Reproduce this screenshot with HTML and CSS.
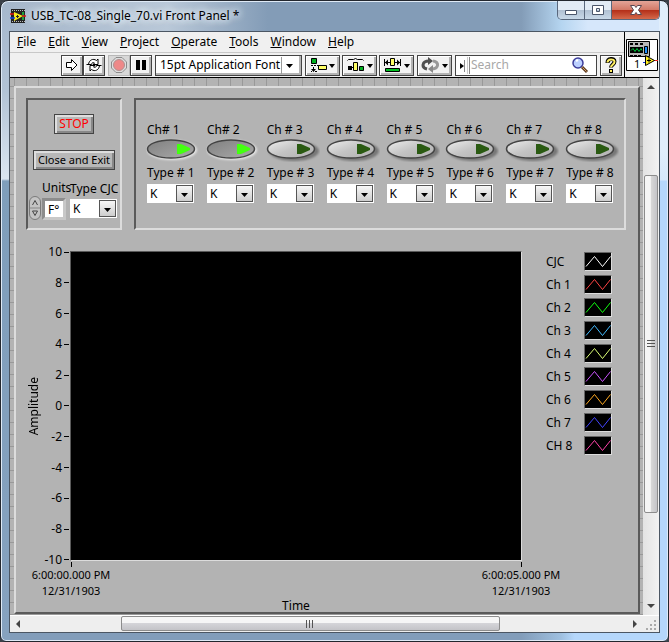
FILE: index.html
```html
<!DOCTYPE html>
<html lang="en">
<head>
<meta charset="utf-8">
<title>USB_TC-08_Single_70.vi Front Panel *</title>
<link rel="stylesheet" href="styles.css">
</head>
<body>
<div class="window">
  <header class="titlebar">
    <svg class="vi-icon" width="16" height="16" viewBox="0 0 16 16" aria-hidden="true">
      <path fill="#222" d="M1 1h14v14H1z"/>
      <path stroke="#bbb" stroke-width="1" stroke-dasharray="1 1" d="M2 2.500h13M2 13.500h13"/>
      <path fill="#f8e71c" d="M4 4l9 4-9 5z"/>
      <path fill="#1ba13a" d="M12 4h2v8h-2z"/>
      <path stroke="#1740e0" stroke-width="1.500" d="M0 10h5"/>
      <path stroke="#e01010" stroke-width="1.500" d="M0 6h4M12 8h4"/>
      <path stroke="#222" d="M6 8.500h3M7.500 7v3"/>
    </svg>
    <h1 class="title">USB_TC-08_Single_70.vi Front Panel *</h1>
    <div class="controls">
      <button class="ctl" aria-label="Minimize"><svg width="14" height="12"><path fill="#fff" stroke="#4b566b" d="M1.500 6.500h11v4h-11z"/></svg></button>
      <button class="ctl" aria-label="Maximize"><svg width="14" height="12"><path fill="#fff" fill-rule="evenodd" stroke="#4b566b" d="M1.500 1.500h11v9h-11zM5.500 4.500h3v3h-3z"/></svg></button>
      <button class="ctl ctl-close" aria-label="Close"><svg width="14" height="12"><path fill="#fff" stroke="#5a4650" d="M1.500 1.500h4l1.500 2 1.500-2h4L9.500 6l3 4.500h-4L7 8.500l-1.500 2h-4l3-4.500z"/></svg></button>
    </div>
  </header>

  <div class="client">
    <div class="top">
      <div class="bars">
        <nav class="menu">
          <a href="#"><u>F</u>ile</a><a href="#"><u>E</u>dit</a><a href="#"><u>V</u>iew</a><a href="#"><u>P</u>roject</a><a href="#"><u>O</u>perate</a><a href="#"><u>T</u>ools</a><a href="#"><u>W</u>indow</a><a href="#"><u>H</u>elp</a>
        </nav>
        <div class="toolbar">
          <div class="group">
            <button class="tool" aria-label="Run"><svg width="14" height="14"><path fill="#fff" stroke="#000" d="M1.500 4.500h5v-3l5.500 5.500-5.500 5.500v-3h-5z"/></svg></button>
            <button class="tool" aria-label="Run continuously"><svg width="16" height="14"><path fill="#fff" stroke="#000" d="M2.500 6.500C3 2 7 0 10.500 2.500l1.500-1.500v5.500H7L8.500 5C7 4 5.500 5 5.500 6.500zM13.500 7.500C13 12 9 14 5.500 11.500L4 13V7.500h5L7.500 9c1.500 1 3 0 3-1.500z"/><path stroke="#000" d="M.5 6.500H4M12 7.500h3.500"/></svg></button>
          </div>
          <div class="group">
            <button class="tool tool-off" aria-label="Abort" disabled><svg width="16" height="16"><path fill="#ddd" stroke="#8c8c8c" d="M5 .5h6L15.500 5v6L11 15.500H5L.5 11V5z"/><circle cx="8" cy="8" r="5.500" fill="#ee8888" stroke="#b09090"/></svg></button>
            <button class="tool" aria-label="Pause"><svg width="12" height="12"><path d="M1 1h4v10H1zM7 1h4v10H7z"/></svg></button>
          </div>
          <label class="font-pick">
            <select class="font-select" aria-label="Text settings"><option>15pt Application Font</option></select>
            <svg class="font-arrow" width="20" height="17"><path stroke="#999" d="M.5 0v17"/><path d="M5 7h7l-3.500 4z"/></svg>
          </label>
          <div class="group group-gap">
            <button class="tool tool-wide" aria-label="Align objects"><svg width="28" height="16"><path fill="#00b020" stroke="#000" d="M2.500 1.500h5v5h-5z"/><path d="M2 8h2v1H2zM5 8h2v1H5zM8 8h2v1H8zM4 10h1v2h2l-2.500 3L2 12h2z"/><path d="M2 14h1v1H2zM6 14h2v1H6z"/><path fill="#ff6" stroke="#000" d="M9.500 8.500h8v4h-8z"/><path d="M20 7h6l-3 4z"/></svg></button>
            <button class="tool tool-wide" aria-label="Distribute objects"><svg width="28" height="16"><path fill="none" stroke="#000" d="M1.500 3.500l1-1h5l2-1 2 1h5l1 1"/><path d="M2 9h4v4H2zM6 10h1v1H6z"/><path fill="#ff6" stroke="#000" d="M7.500 5.500h4v8h-4z"/><path fill="#00b020" stroke="#000" d="M13.500 9.500h4v4h-4z"/><path d="M21 7h6l-3 4z"/></svg></button>
            <button class="tool tool-wide" aria-label="Resize objects"><svg width="28" height="16"><path stroke="#000" d="M1.500 2v7M17.500 2v7M2 5.500h5M12 5.500h5"/><path d="M2 5.500l3-3v6zM17 5.500l-3-3v6z"/><path fill="#ff6" stroke="#000" d="M7.500 1.500h4v7h-4z"/><path fill="#00c020" stroke="#000" d="M2.500 11.500h14v3h-14z"/><path d="M21 7h6l-3 4z"/></svg></button>
          </div>
          <button class="tool tool-wide" aria-label="Reorder"><svg width="28" height="16"><path fill="none" stroke="#505050" stroke-width="3" d="M6 12C0 10.500 1 4 8 4"/><path fill="none" stroke="#999" stroke-width="3" d="M12 4c6.500 1 6 7.500-1 8"/><path fill="#505050" d="M7 0l5 4-5 4z"/><path fill="#888" d="M12 8v8l-5-4z"/><path d="M21 7h6l-3 4z"/></svg></button>
          <div class="search">
            <svg width="12" height="17" aria-hidden="true"><path d="M2 6l4 3-4 3z"/><path stroke="#888" d="M6.500 3v12M11.500 0v17"/><path stroke="#ccc" d="M9.500 0v17"/></svg>
            <input class="search-box" type="text" placeholder="Search" aria-label="Search">
            <svg width="18" height="18" aria-hidden="true"><circle cx="7" cy="7" r="5" fill="#bcd0ff" stroke="#3d3d9a" stroke-width="1.500"/><path stroke="#fff" stroke-width="2" d="M5 5l2-1"/><path stroke="#5d3b20" stroke-width="3" d="M11 11l5 5"/><path stroke="#d9a066" d="M11.500 11.500l4 4"/></svg>
          </div>
          <button class="tool" aria-label="Help"><svg width="12" height="16"><path fill="none" stroke="#000" stroke-width="4" d="M2.500 6c0-5 7-5 7-1.500 0 3-3.500 3-3.500 6M6 12v4"/><path fill="none" stroke="#ffef60" stroke-width="2" d="M2.500 5.500c0-4 7-4 7-.8 0 3-3.500 3-3.500 5.500M6 13v2"/></svg></button>
        </div>
      </div>
      <div class="vi-pane">
        <svg width="32" height="32" viewBox="0 0 32 32" role="img" aria-label="VI icon">
          <path fill="#fff" stroke="#000" d="M.5.5h31v31H.5z"/>
          <path fill="#b8b8b8" stroke="#000" d="M2.500 2.500h21v15h-21z"/>
          <path stroke="#000" stroke-width="2" stroke-dasharray="3 2" d="M4 5h14"/>
          <path d="M4 8h13v6H4z"/>
          <path fill="none" stroke="#00d040" d="M5 11.500l2-2 2 3 2-3 2 3 2-3 1 2"/>
          <path fill="#2090ff" stroke="#000" d="M18.500 7.500h3v7h-3z"/>
          <path stroke="#000" stroke-dasharray="3 1" d="M4 16.500h12"/>
          <path stroke="#1030e0" d="M17 23.500h3"/>
          <path stroke="#e02020" d="M28 21.500h4"/>
          <path fill="#ffee20" stroke="#000" d="M19.500 16.500l9 5-9 5z"/>
          <path stroke="#000" d="M21 21.500h4M23 19.500v4"/>
          <text class="vi-num" x="8" y="29">1</text>
        </svg>
      </div>
    </div>

    <div class="middle">
      <main class="canvas">
        <div class="panel">
          <div class="boxes">
            <section class="box box-main">
              <button class="push push-stop">STOP</button>
              <button class="push">Close and Exit</button>
              <div class="settings">
                <div class="spin" aria-hidden="true"><svg width="14" height="24"><rect x="1.500" y=".5" width="11" height="23" rx="5.500" fill="#c4c4c4" stroke="#7a7a7a"/><path stroke="#888" d="M2 12h10"/><path fill="none" stroke="#444" d="M4.500 9L7 4.500 9.500 9M4.500 15h5L7 19.500z"/></svg></div>
                <div class="field field-units"><label for="units">Units</label><input id="units" class="units" type="text" value="F°"></div>
                <div class="field field-cjc"><label for="cjc">Type CJC</label>
                  <div class="combo"><select id="cjc"><option>K</option></select><svg width="17" height="17"><use href="#drop"/></svg></div>
                </div>
              </div>
            </section>
            <section class="box box-channels" id="channels"></section>
          </div>

          <div class="chart-row">
            <div class="y-title"><span>Amplitude</span></div>
            <div class="y-axis" id="yaxis"></div>
            <div class="plot-col">
              <div class="plot"></div>
              <div class="x-axis">
                <div class="x-label"><i></i>6:00:00.000 PM<br>12/31/1903</div>
                <div class="x-label"><i></i>6:00:05.000 PM<br>12/31/1903</div>
              </div>
              <div class="x-title">Time</div>
            </div>
            <ul class="legend" id="legend"></ul>
          </div>
        </div>
      </main>
      <div class="vscroll">
        <svg width="16" height="17"><path fill="#444" d="M4 11h8L8 7z"/></svg>
        <div class="vtrack"><div class="vthumb"></div></div>
        <svg width="16" height="17"><path fill="#444" d="M4 6h8l-4 4z"/></svg>
      </div>
    </div>
    <div class="hscroll">
      <svg width="17" height="16"><path fill="#444" d="M10 4v8L6 8z"/></svg>
      <div class="htrack"><div class="hthumb"></div></div>
      <svg width="17" height="16"><path fill="#444" d="M7 4v8l4-4z"/></svg>
      <svg width="16" height="16"><path stroke="#aaa" stroke-width="2" stroke-dasharray="2 2" d="M11 5h2M7 9h6M3 13h10"/></svg>
    </div>
  </div>
</div>

<svg class="defs" width="0" height="0" aria-hidden="true">
  <defs>
    <linearGradient id="off" x1="0" y1="0" x2="1" y2="1"><stop offset="0" stop-color="#eee"/><stop offset=".5" stop-color="#c4c4c4"/><stop offset="1" stop-color="#b0b0b0"/></linearGradient>
    <linearGradient id="on" x1="0" y1="0" x2="1" y2="1"><stop offset="0" stop-color="#808080"/><stop offset="1" stop-color="#aaa"/></linearGradient>
    <linearGradient id="face" x1="0" y1="0" x2="0" y2="1"><stop offset="0" stop-color="#f8f8f8"/><stop offset="1" stop-color="#ccc"/></linearGradient>
    <filter id="soft" x="-20%" y="-40%" width="140%" height="180%"><feGaussianBlur stdDeviation="1.200"/></filter>
    <g id="drop"><rect x=".5" y=".5" width="16" height="16" fill="url(#face)" stroke="#555"/><path d="M5 8h7l-3.500 4z"/></g>
  </defs>
</svg>
<script src="app.js"></script>
</body>
</html>
```
FILE: styles.css
```css
* { box-sizing: border-box; }
body {
  margin: 0;
  background: #3a4048;
  color: #000;
  font: 12px/16px "Noto Sans", "Open Sans", sans-serif;
}
button, input, select { font: inherit; color: inherit; margin: 0; padding: 0; }
svg { display: block; flex: none; }
.defs { position: absolute; }

.window {
  display: flex;
  flex-direction: column;
  height: 100vh;
  min-height: 560px;
  padding: 0 8px 8px;
  border: 1px solid #23272e;
  border-radius: 8px 8px 6px 6px;
  box-shadow: inset 0 0 0 1px #dfeaf6;
  background:
    linear-gradient(#e0eefc 0 150px, #d6e8fb 179px, #b5d7fb 180px) right / 9px 100% no-repeat,
    linear-gradient(#a5b7cc 0, #b2c3d6 90px, #dbe5f0 178px, #7f9ebb 180px, #86a2bf) left / 9px 100% no-repeat,
    linear-gradient(90deg, #a5b6ca, #b9c8d8 25%, #839cb7 40%, #839cb7 78%, #b5d5f0 84%, #d6e7fb 88%) top / 100% 31px no-repeat,
    linear-gradient(90deg, #829dba 78%, #9fc0e0 84%, #b5d7fb 86%);
}
.titlebar { display: flex; align-items: center; height: 30px; padding-left: 1px; }
.title {
  flex: 1;
  margin: 0 0 0 5px;
  font-size: 12px;
  font-weight: 400;
  text-shadow: 0 0 6px #e8f0f8, 0 0 8px #e8f0f8, 0 0 10px #e8f0f8;
}
.controls {
  display: flex;
  align-self: flex-start;
  border: 1px solid #59677c;
  border-top: 0;
  border-radius: 0 0 5px 5px;
  overflow: hidden;
}
.ctl {
  display: grid;
  place-items: center;
  width: 27px;
  height: 18px;
  border: 0;
  border-right: 1px solid #59677c;
  background: linear-gradient(#e2ebf5 0 48%, #b0c0d2 50%, #c8d8e8);
}
.ctl-close { width: 47px; border: 0; background: linear-gradient(#e3a498 0, #d37a68 48%, #b32d17 50%, #d4694b); }

.client {
  flex: 1;
  display: flex;
  flex-direction: column;
  min-height: 0;
  border: 1px solid #4b5663;
}
.top { display: flex; border-bottom: 1px solid #000; background: #f0f0f0; }
.bars { flex: 1; min-width: 0; }
.menu { display: flex; align-items: center; gap: 12px; height: 21px; padding: 0 7px; border-bottom: 1px solid #c8c8c8; }
.menu a { color: inherit; text-decoration: none; }
.toolbar { display: flex; align-items: center; gap: 3px; height: 24px; padding: 0 2px 0 51px; }
.group { display: flex; }
.group-gap { gap: 2px; }
.tool {
  display: grid;
  place-items: center;
  width: 22px;
  height: 21px;
  border: 1px solid #444;
  background: #f2f2f2;
  box-shadow: inset 1px 1px #fff, inset -2px -2px #b4b4b4;
}
.tool-off { border-color: #b8b8b8; background: #d8d8d8; box-shadow: none; }
.tool-wide { width: 35px; }
.font-pick, .combo { display: grid; grid-template-columns: 1fr auto; align-items: center; }
.font-pick {
  width: 147px;
  height: 21px;
  border: 1px solid #444;
  background: #fff;
  box-shadow: inset -2px -2px #b4b4b4;
}
.font-select { width: 100%; padding-left: 4px; border: 0; background: none; appearance: none; }
.search { display: flex; align-items: center; flex: 1; min-width: 0; height: 21px; padding: 0 7px 0 2px; border: 1px solid #444; background: #fff; }
.search-box { flex: 1; width: 20px; min-width: 0; padding-left: 1px; border: 0; background: none; }
.search-box::placeholder { color: #a8a8a8; }
.vi-pane { display: grid; place-items: center; width: 35px; border-left: 1px solid #000; }
.vi-num { font: 11px "Noto Sans", sans-serif; }

.middle { flex: 1; display: flex; min-height: 0; }
.canvas {
  flex: 1;
  display: flex;
  min-width: 0;
  padding: 8px 3px 1px 4px;
  background:
    repeating-linear-gradient(90deg, #999 0 1px, transparent 1px 12px) 4px 0,
    repeating-linear-gradient(#999 0 1px, transparent 1px 12px) 0 8px,
    #b3b3b3;
}
.panel {
  flex: 1;
  display: flex;
  flex-direction: column;
  min-width: 0;
  padding: 10px 12px 0 10px;
  border: 2px solid;
  border-color: #dcdcdc #5a5a5a #5a5a5a #dcdcdc;
  background: #b3b3b3;
}
.boxes { display: flex; gap: 12px; }
.box { height: 132px; border: 2px solid; border-color: #5a5a5a #dcdcdc #dcdcdc #5a5a5a; }
.box-main { display: flex; flex-direction: column; align-items: center; width: 96px; padding-top: 14px; }
.push {
  height: 20px;
  padding: 0 4px;
  border: 1px solid #444;
  background: #b8b8b8;
  box-shadow: inset 2px 2px #dedede, inset -2px -2px #888;
  font-size: 11px;
  line-height: 16px;
  white-space: nowrap;
}
.push-stop { margin-bottom: 16px; color: #f00; font-size: 12px; }
.settings { display: flex; align-self: stretch; align-items: flex-end; margin-top: 10px; }
.field label { display: block; height: 18px; line-height: 16px; white-space: nowrap; }
.field-units { width: 25px; }
.units {
  display: block;
  width: 24px;
  height: 22px;
  padding-left: 3px;
  border: 3px solid;
  border-color: #8c8c8c #c8c8c8 #c8c8c8 #8c8c8c;
  background: #fff;
}
.field-cjc { width: 48px; margin-left: 3px; }
.combo { width: 47px; height: 19px; padding-right: 1px; background: #fff; }
.combo select { width: 100%; padding-left: 3px; border: 0; background: none; appearance: none; }
.field-cjc .combo { margin-bottom: 2px; }

.box-channels { flex: 1; display: grid; grid-template-columns: repeat(8, 1fr); padding: 22px 0 0 9px; }
.channel { display: flex; flex-direction: column; align-items: flex-start; white-space: nowrap; }
.channel label { padding-left: 2px; }
.led { margin: 0 0 3px 1px; padding: 0; border: 0; background: none; }
.channel .combo { margin: 3px 0 0 2px; }

.chart-row { flex: 1; display: flex; min-height: 0; padding-top: 21px; }
.y-title { display: grid; place-items: center; width: 16px; margin-bottom: 50px; }
.y-title span { writing-mode: vertical-rl; transform: rotate(180deg); }
.y-axis {
  display: flex;
  flex-direction: column;
  justify-content: space-between;
  width: 28px;
  margin: -7px 0 44px;
}
.tick { display: flex; align-items: center; justify-content: flex-end; gap: 2px; height: 16px; padding-right: 1px; }
.tick i { width: 5px; height: 1px; background: #000; }
.plot-col { flex: 1; display: flex; flex-direction: column; min-width: 0; }
.plot { flex: 1; border: 1px solid; border-color: #5a5a5a #dcdcdc #dcdcdc #5a5a5a; background: #000; }
.x-axis { display: flex; justify-content: space-between; margin: 0 -40px; }
.x-label { width: 82px; font-size: 11px; line-height: 16px; text-align: center; white-space: nowrap; }
.x-label i { display: block; width: 1px; height: 5px; margin: 1px auto 0; background: #000; }
.x-title { height: 13px; line-height: 14px; text-align: center; }
.legend { width: 104px; margin: 1px 0 0; padding: 0 14px 0 24px; list-style: none; }
.legend li { display: flex; align-items: center; justify-content: space-between; height: 19px; margin-bottom: 4px; }
.swatch { border: 1px solid; border-color: #666 #dcdcdc #dcdcdc #666; background: #000; }

.vscroll { display: flex; flex-direction: column; width: 16px; background: linear-gradient(90deg, #e3e3e3, #f2f2f2); }
.vtrack { flex: 1; display: flex; flex-direction: column; padding-top: 80px; }
.vthumb {
  height: 80%;
  margin: 0 1px;
  border: 1px solid #8c8c8c;
  border-radius: 2px;
  background:
    repeating-linear-gradient(#555 0 1px, transparent 1px 3px) center / 8px 8px no-repeat,
    linear-gradient(90deg, #f6f6f6 0 45%, #d8d8d8 50%, #c4c4c8);
}
.hscroll { display: flex; height: 17px; border-top: 1px solid #fff; background: #eee; }
.htrack { flex: 1; display: flex; padding-left: 94px; }
.hthumb {
  width: 75%;
  margin: 0 0 1px;
  border: 1px solid #8c8c8c;
  border-radius: 2px;
  background:
    repeating-linear-gradient(90deg, #555 0 1px, transparent 1px 3px) center / 8px 8px no-repeat,
    linear-gradient(#f6f6f6 0 45%, #d4d4d8 50%, #c4c4c8);
}
```
FILE: app.js
```js
const channels = document.getElementById("channels");
for (let n = 1; n <= 8; n++) {
  const on = n <= 2;
  const gap = on ? "" : " ";
  channels.insertAdjacentHTML("beforeend", `
    <div class="channel">
      <label for="led${n}">Ch${gap}# ${n}</label>
      <button class="led" id="led${n}" aria-pressed="${on}">
        <svg width="54" height="24">
          <ellipse cx="${on ? 26 : 28}" cy="${on ? 12 : 13}" rx="25" ry="10" fill="${on ? "#e8e8e8" : "#777"}" filter="url(#soft)"/>
          <ellipse cx="25" cy="11" rx="23.500" ry="9" fill="url(#${on ? "on" : "off"})" stroke="#444" stroke-width="1.500"/>
          <path fill="${on ? "#4f1" : "#2a5a12"}" d="M31 6h4l9 4v2l-9 4h-4z"/>
        </svg>
      </button>
      <label for="type${n}">Type # ${n}</label>
      <div class="combo"><select id="type${n}"><option>K</option></select><svg width="17" height="17"><use href="#drop"/></svg></div>
    </div>`);
}

const yaxis = document.getElementById("yaxis");
for (let v = 10; v >= -10; v -= 2) {
  yaxis.insertAdjacentHTML("beforeend", `<div class="tick">${v}<i></i></div>`);
}

const series = [["CJC", "#fff"], ["Ch 1", "#f44"], ["Ch 2", "#1f1"], ["Ch 3", "#4bf"], ["Ch 4", "#df7"],
  ["Ch 5", "#c5f"], ["Ch 6", "#fa2"], ["Ch 7", "#44f"], ["CH 8", "#f4a"]];
const legend = document.getElementById("legend");
for (const [name, color] of series) {
  legend.insertAdjacentHTML("beforeend", `<li>${name}<svg class="swatch" width="28" height="19" viewBox="0 0 26 17"><path fill="none" stroke="${color}" d="M1 13.500l8.500-10 8 10 8-10"/></svg></li>`);
}
```
